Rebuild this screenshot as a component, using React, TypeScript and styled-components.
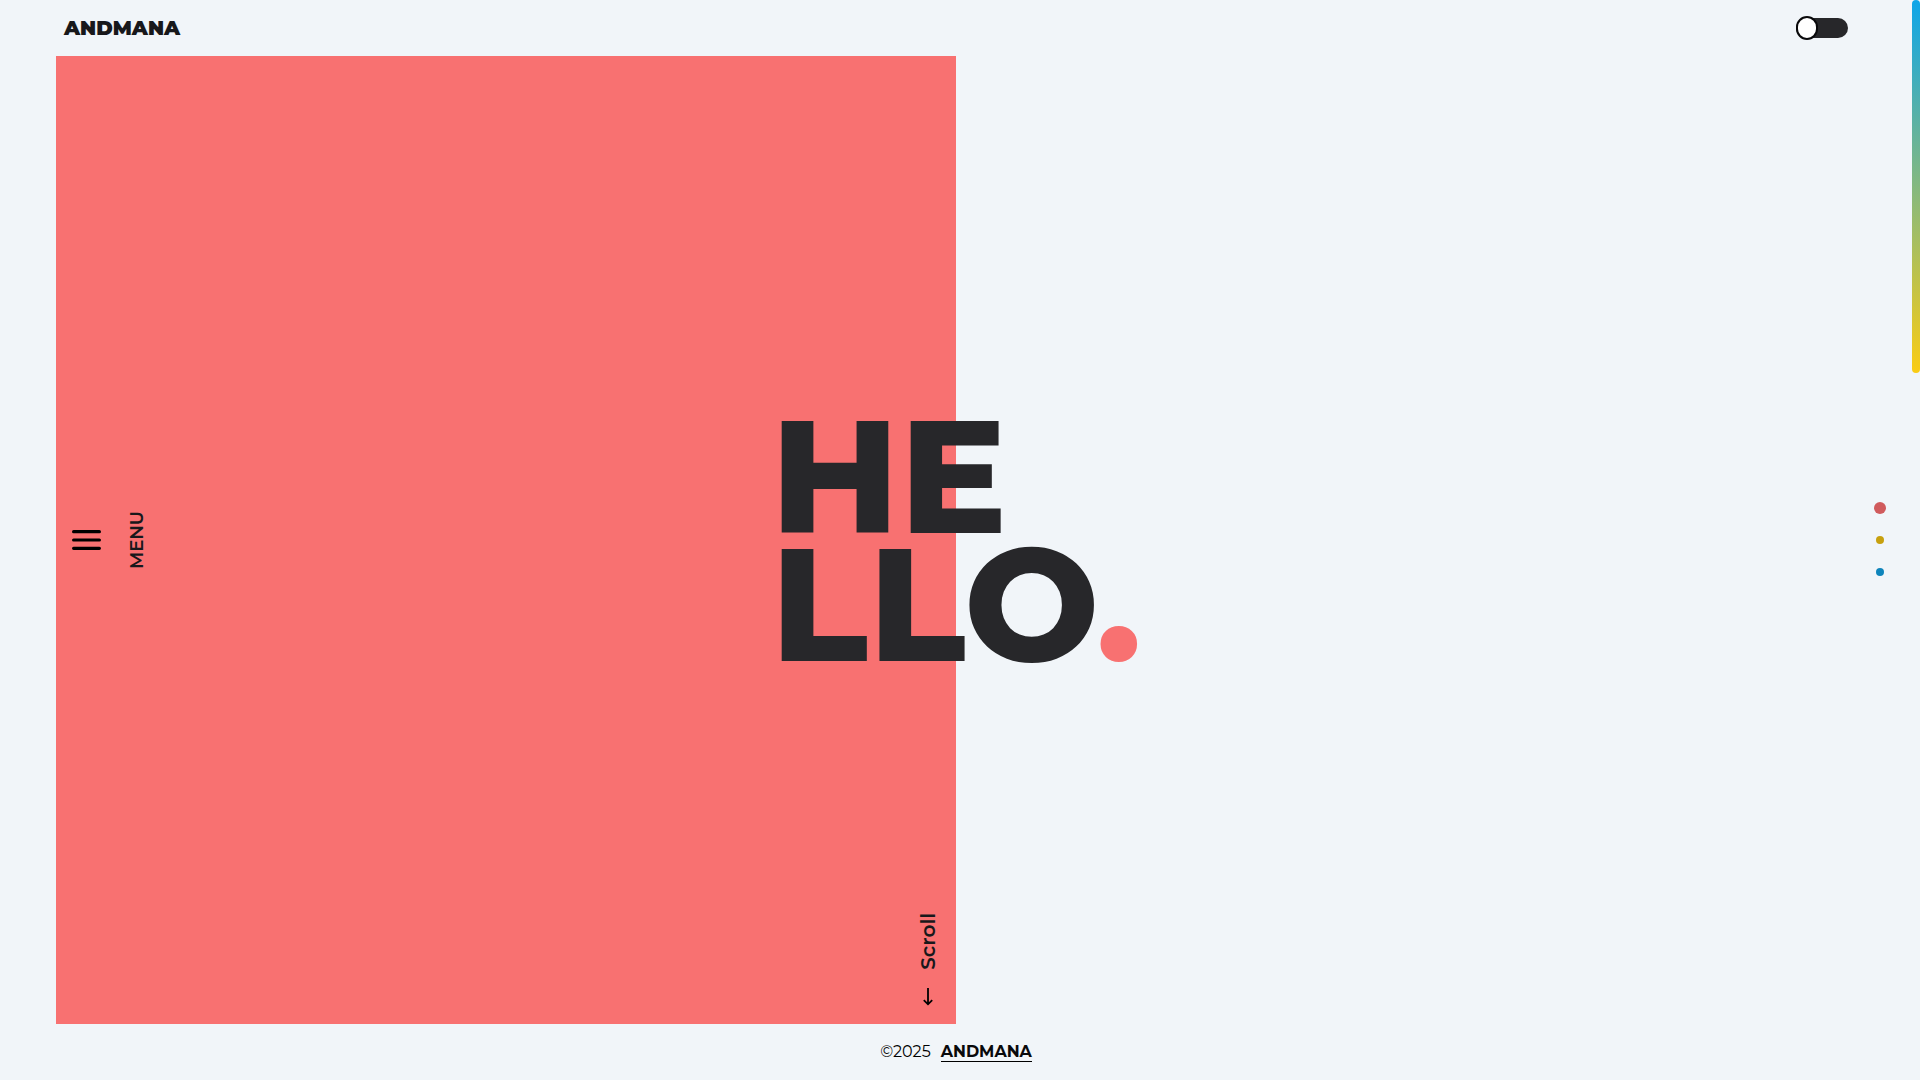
import { useState } from "react";
import styled, { createGlobalStyle } from "styled-components";

const GlobalStyle = createGlobalStyle`
  *, *::before { box-sizing: border-box; }
  body {
    margin: 0;
    background: #f1f5f9;
    color: #18181b;
    font-family: Montserrat, Inter, "Liberation Sans", sans-serif;
  }
`;

const Page = styled.div`
  display: grid;
  grid-template-columns: minmax(0, 1fr) 8px;
  height: 100vh;
  overflow: hidden;
`;

const Frame = styled.div`
  display: grid;
  grid-template-columns: 56px minmax(0, 1fr) minmax(0, 1fr) 56px;
  grid-template-rows: 56px minmax(0, 1fr) 56px;
`;

const Header = styled.header`
  grid-area: 1 / 2 / 2 / 4;
  display: flex;
  align-items: center;
  justify-content: space-between;
  padding: 0 8px;
`;

const Logo = styled.a`
  color: #18181b;
  font-size: 20px;
  font-weight: 900;
  line-height: 28px;
  text-decoration: none;
`;

const Switch = styled.input`
  appearance: none;
  display: flex;
  align-items: center;
  width: 52px;
  height: 20px;
  margin: 0;
  border-radius: 10px;
  background: #27272a;
  cursor: pointer;

  &::before {
    content: "";
    width: 22px;
    height: 24px;
    flex: none;
    border: 2px solid #09090b;
    border-radius: 12px;
    background: #fff;
  }

  &:checked {
    justify-content: flex-end;
  }
`;

const Panel = styled.section`
  grid-area: 2 / 2 / 3 / 3;
  display: flex;
  justify-content: space-between;
  padding: 16px;
  background: #f87171;
`;

const MenuButton = styled.button`
  align-self: center;
  display: flex;
  align-items: center;
  gap: 24px;
  padding: 0;
  border: 0;
  background: none;
  color: #18181b;
  font: inherit;
  cursor: pointer;
`;

const SideText = styled.span<{ $size: number }>`
  font-size: ${(p) => p.$size}px;
  font-weight: 600;
  line-height: 24px;
  writing-mode: vertical-rl;
  transform: rotate(180deg);
`;

const ScrollLink = styled.a`
  align-self: flex-end;
  display: flex;
  flex-direction: column;
  align-items: center;
  gap: 18px;
  color: #18181b;
  text-decoration: none;
`;

const Hero = styled.h1`
  grid-area: 2 / 2 / 3 / 4;
  place-self: center;
  margin: 0;
  color: #27272a;
  font-size: 160px;
  font-weight: 800;
  line-height: 128px;
`;

const Line = styled.span`
  display: block;
`;

const Stop = styled.span`
  color: #f87171;
`;

const Pager = styled.nav`
  grid-area: 2 / 4 / 3 / 5;
  place-self: center;
  display: flex;
  flex-direction: column;
  align-items: center;
  gap: 20px;
  padding-right: 8px;
`;

const Dot = styled.a<{ $color: string; $active?: boolean }>`
  display: grid;
  place-items: center;
  width: 12px;
  height: 12px;

  &::before {
    content: "";
    width: ${(p) => (p.$active ? 12 : 8)}px;
    height: ${(p) => (p.$active ? 12 : 8)}px;
    border-radius: 50%;
    background: ${(p) => p.$color};
  }
`;

const Footer = styled.footer`
  grid-area: 3 / 2 / 4 / 4;
  display: flex;
  align-items: center;
  justify-content: center;
  gap: 10px;
  color: #000;
  font-size: 16px;
  line-height: 18px;
`;

const FooterLink = styled.a`
  border-bottom: 1px solid #000;
  color: #09090b;
  font-weight: 700;
  text-decoration: none;
`;

const ScrollThumb = styled.div`
  height: 373px;
  border-radius: 4px;
  background: linear-gradient(#0ea5e9, #facc15);
`;

const pages = [
  { name: "Home", color: "#d05b5d" },
  { name: "Work", color: "#c7a00f" },
  { name: "Contact", color: "#0e84bb" },
];

export default function App() {
  const [dark, setDark] = useState(false);
  return (
    <Page>
      <GlobalStyle />
      <Frame>
        <Header>
          <Logo href="#">ANDMANA</Logo>
          <Switch
            type="checkbox"
            role="switch"
            aria-label="Dark mode"
            checked={dark}
            onChange={(e) => setDark(e.target.checked)}
          />
        </Header>
        <Panel>
          <MenuButton type="button">
            <svg width="29" height="22" viewBox="0 0 29 22" aria-hidden="true">
              <path d="M1.6 2.7h25.8M1.6 11h25.8M1.6 19.3h25.8" stroke="#000" strokeWidth="3.2" strokeLinecap="round" />
            </svg>
            <SideText $size={18}>MENU</SideText>
          </MenuButton>
          <ScrollLink href="#work">
            <SideText $size={20}>Scroll</SideText>
            <svg width="10" height="20" viewBox="0 0 10 20" aria-hidden="true">
              <path d="M5 -.6v17M.8 12.2 5 16.3l4.2-4.1" fill="none" stroke="#000" strokeWidth="1.8" overflow="visible" />
            </svg>
          </ScrollLink>
        </Panel>
        <Hero>
          <Line>HE</Line>
          <Line>
            LLO<Stop>.</Stop>
          </Line>
        </Hero>
        <Pager aria-label="Sections">
          {pages.map((p, i) => (
            <Dot key={p.name} href={"#" + p.name.toLowerCase()} aria-label={p.name} $color={p.color} $active={i === 0} />
          ))}
        </Pager>
        <Footer>
          <span>©2025</span>
          <FooterLink href="#">ANDMANA</FooterLink>
        </Footer>
      </Frame>
      <ScrollThumb />
    </Page>
  );
}
